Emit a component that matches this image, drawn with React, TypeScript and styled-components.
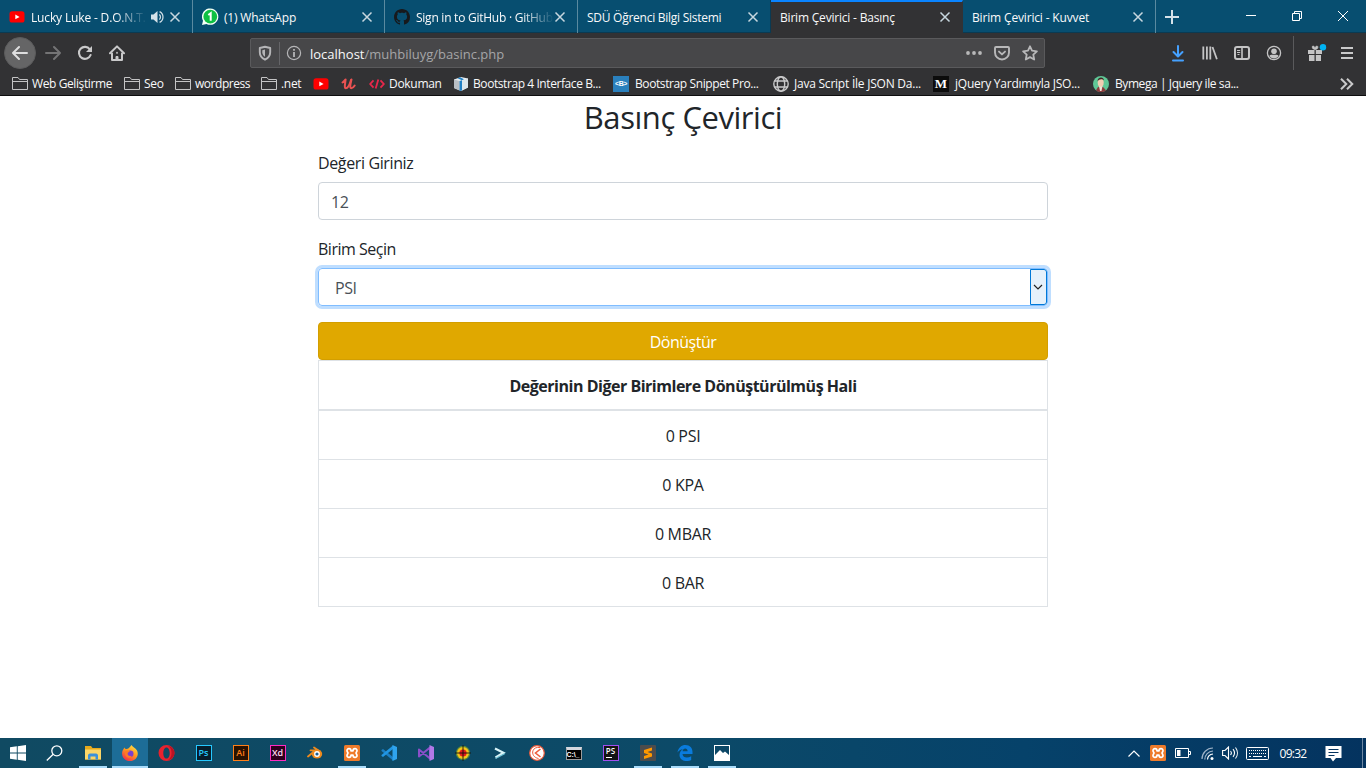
import React from 'react';
import styled, { createGlobalStyle, css } from 'styled-components';

const GlobalStyle = createGlobalStyle`
  * { box-sizing: border-box; }
  body { margin: 0; background: #fff; font-family: "Open Sans", "Noto Sans", sans-serif; }
  svg { display: block; flex: none; }
`;

const Screen = styled.div`
  width: 1366px;
  height: 768px;
  display: flex;
  flex-direction: column;
  overflow: hidden;
`;

/* ---------- tab strip ---------- */

const TabStrip = styled.div`
  height: 33px;
  display: flex;
  background: #074e70;
  box-shadow: inset 0 -1px 0 #0a3a52;
  flex: none;
`;

const Tab = styled.div<{ $width: number; $active?: boolean; $line?: boolean }>`
  width: ${p => p.$width}px;
  height: 33px;
  padding: 1px 11px 0 9px;
  display: flex;
  align-items: center;
  color: #f9f9fa;
  font-size: 12px;
  border-right: 1px solid ${p => (p.$line ? '#5a8aa0' : '#0a3a52')};
  ${p => p.$active && css`
    background: #323234;
    border-right-color: #323234;
    border-top: 2px solid #0a84ff;
    padding-top: 0;
    padding-bottom: 1px;
  `}
`;

const TabTitle = styled.span<{ $gap?: number; $spacing: number; $fade?: boolean }>`
  flex: 1;
  min-width: 0;
  overflow: hidden;
  white-space: nowrap;
  line-height: 20px;
  margin-left: ${p => p.$gap ?? 0}px;
  padding-top: 1px;
  letter-spacing: ${p => p.$spacing}px;
  ${p => p.$fade && css`
    mask-image: linear-gradient(to left, transparent 0, #000 32px);
  `}
`;

const SoundSlot = styled.span`
  margin: 0 5px 0 4px;
`;

const NewTab = styled.div`
  width: 32px;
  display: flex;
  align-items: center;
  justify-content: center;
`;

const WindowButtons = styled.div`
  margin-left: auto;
  display: flex;
`;

const WindowButton = styled.div`
  width: 46px;
  height: 31px;
  display: flex;
  align-items: center;
  justify-content: center;
`;

/* ---------- navigation bar ---------- */

const NavBar = styled.div`
  height: 39px;
  display: flex;
  align-items: center;
  background: #323234;
  padding: 0 9px 0 4px;
  flex: none;
`;

const BackButton = styled.div`
  width: 32px;
  height: 32px;
  border-radius: 50%;
  background: #656566;
  border: 1px solid #5b5b5c;
  display: flex;
  align-items: center;
  justify-content: center;
`;

const NavIcon = styled.div<{ $width: number }>`
  width: ${p => p.$width}px;
  height: 32px;
  display: flex;
  align-items: center;
  justify-content: center;
  margin-top: 1px;
`;

const UrlBar = styled.div`
  width: 795px;
  height: 30px;
  margin: 1px 0 0 117px;
  padding: 0 6px;
  background: #474749;
  border: 1px solid #5a5a5c;
  border-radius: 2px;
  display: flex;
  align-items: center;
`;

const UrlDivider = styled.div`
  width: 1px;
  height: 23px;
  margin: 0 6px;
  background: #656568;
`;

const Url = styled.div`
  flex: 1;
  margin-left: 8px;
  font-size: 13px;
  line-height: 20px;
  letter-spacing: 0;
  color: #a5a5a7;
  padding-top: 2px;
  b { font-weight: 400; color: #f9f9fa; }
`;

const UrlActions = styled.div`
  display: flex;
  align-items: center;
  gap: 12px;
`;

const NavTools = styled.div`
  margin-left: auto;
  display: flex;
  align-items: center;
`;

const ToolDivider = styled.div`
  width: 1px;
  height: 34px;
  margin: 0 5px 0 3px;
  background: #5a5a5c;
`;

/* ---------- bookmarks ---------- */

const BookmarkBar = styled.div`
  height: 24px;
  padding: 0 12px;
  display: flex;
  align-items: center;
  background: #323234;
  border-bottom: 1px solid #0e0e0f;
  flex: none;
`;

const Bookmark = styled.div<{ $width: number; $gap?: number; $spacing?: number }>`
  width: ${p => p.$width}px;
  display: flex;
  align-items: center;
  gap: ${p => p.$gap ?? 4}px;
  font-size: 12px;
  line-height: 20px;
  white-space: nowrap;
  color: #f9f9fa;
  letter-spacing: ${p => p.$spacing ?? -0.3}px;
`;

const Overflow = styled.div`
  margin-left: auto;
`;

/* ---------- page ---------- */

const Page = styled.main`
  flex: 1;
  width: 730px;
  margin: 0 auto;
  color: #212529;
  font-size: 16px;
  line-height: 24px;
`;

const Title = styled.h2`
  margin: 0 0 16px;
  height: 38px;
  padding-top: 2px;
  font-size: 31px;
  font-weight: 400;
  line-height: 38px;
  text-align: center;
  letter-spacing: -0.45px;
`;

const FormGroup = styled.div`
  margin-bottom: 16px;
`;

const FieldLabel = styled.label<{ $spacing: number }>`
  display: block;
  height: 24px;
  padding-top: 1px;
  margin-bottom: 8px;
  letter-spacing: ${p => p.$spacing}px;
`;

const Field = styled.div<{ $focus?: boolean }>`
  height: 38px;
  border: 1px solid ${p => (p.$focus ? '#80bdff' : '#ced4da')};
  border-radius: 4px;
  padding-left: ${p => (p.$focus ? 16 : 12)}px;
  display: flex;
  align-items: center;
  justify-content: space-between;
  color: #495057;
  letter-spacing: -0.4px;
  box-shadow: ${p => (p.$focus ? '0 0 0 3px #bfdeff' : 'none')};
  span { padding-top: 2px; }
`;

const SelectArrow = styled.div`
  width: 17px;
  height: 36px;
  border: 1px solid #0078d7;
  border-radius: 0 3px 3px 0;
  background: #e5f1fb;
  display: flex;
  align-items: center;
  justify-content: center;
  padding-right: 1px;
`;

const Submit = styled.button`
  display: block;
  width: 100%;
  height: 38px;
  padding: 2px 0 0;
  border: 1px solid #d39e00;
  border-radius: 4px;
  background: #e0a800;
  color: #fff;
  font: 400 16px/24px "Open Sans", "Noto Sans", sans-serif;
  letter-spacing: -0.5px;
`;

const Results = styled.div`
  border: 1px solid #dee2e6;
  border-top: 0;
  text-align: center;
`;

const ResultHead = styled.div`
  height: 50px;
  padding-top: 13px;
  border-top: 1px solid #dee2e6;
  border-bottom: 1px solid #dee2e6;
  font-weight: 700;
  letter-spacing: -0.48px;
`;

const ResultRow = styled.div`
  height: 49px;
  padding-top: 13px;
  border-top: 1px solid #dee2e6;
  letter-spacing: -0.3px;
`;

/* ---------- taskbar ---------- */

const Taskbar = styled.div`
  height: 30px;
  display: flex;
  background: linear-gradient(90deg, #104a62 0%, #0c4a68 50%, #06426a 75%, #04335f 100%);
  flex: none;
`;

const TaskItem = styled.div<{ $open?: boolean; $active?: boolean; $system?: boolean }>`
  width: ${p => (p.$active ? 36 : p.$open ? 28 : 37)}px;
  margin: 0 ${p => (p.$active ? '0' : p.$open ? '4px' : '0')} 0 ${p => (p.$active ? '1px' : p.$open ? '5px' : '0')};
  padding-right: ${p => (p.$system ? 2 : 0)}px;
  height: 30px;
  display: flex;
  align-items: center;
  justify-content: center;
  background: ${p => (p.$active ? '#1d6d97' : 'transparent')};
  box-shadow: ${p => (p.$open || p.$active ? 'inset 0 -2px 0 #a9dcfb' : 'none')};
`;

const AppTile = styled.div<{ $bg: string; $color: string; $border: string; $size?: number }>`
  width: 16px;
  height: 16px;
  background: ${p => p.$bg};
  color: ${p => p.$color};
  border: 1px solid ${p => p.$border};
  font: 600 ${p => p.$size ?? 9}px/14px "Open Sans", sans-serif;
  text-align: center;
`;

const Tray = styled.div`
  margin-left: auto;
  width: 240px;
  display: flex;
  align-items: center;
`;

const TrayIcon = styled.div<{ $width: number }>`
  width: ${p => p.$width}px;
  display: flex;
  justify-content: center;
`;

const Clock = styled.div`
  width: 32px;
  text-align: center;
  font-size: 12px;
  letter-spacing: -0.75px;
  color: #fff;
`;

const ShowDesktop = styled.div`
  width: 4px;
  height: 30px;
  margin-left: auto;
  border-left: 1px solid #6d87a3;
`;

/* ---------- icons ---------- */

const stroke = { fill: 'none', stroke: 'currentColor' } as const;

const Close = () => (
  <svg width="12" height="12" viewBox="0 0 12 12" color="#c7d7df" {...stroke} strokeWidth="1.5">
    <path d="M1.5 1.5l9 9M10.5 1.5l-9 9" />
  </svg>
);

const YouTube = () => (
  <svg width="16" height="16" viewBox="0 0 16 16">
    <rect x="0.5" y="2.3" width="15" height="11.2" rx="2.6" fill="#f00" />
    <path d="M6.3 5.5v4.8l4.3-2.4z" fill="#fff" />
  </svg>
);

const WhatsApp = () => (
  <svg width="18" height="18" viewBox="0 0 18 18">
    <path d="M0 17l1-4.300A8.200 8.200 0 1 1 4.500 16z" fill="#f4fff6" />
    <circle cx="8.300" cy="8.700" r="6.900" fill="#0ec143" />
    <path d="M6.300 7l2.400-1.700v7.500" fill="none" stroke="#fff" strokeWidth="2" />
  </svg>
);

const GitHub = () => (
  <svg width="16" height="16" viewBox="0 0 16 16">
    <path
      fill="#17191c"
      d="M8 0C3.58 0 0 3.58 0 8c0 3.54 2.29 6.53 5.47 7.59.4.07.55-.17.55-.38 0-.19-.01-.82-.01-1.49-2.01.37-2.53-.49-2.69-.94-.09-.23-.48-.94-.82-1.13-.28-.15-.68-.52-.01-.53.63-.01 1.08.58 1.23.82.72 1.21 1.87.87 2.33.66.07-.52.28-.87.51-1.07-1.78-.2-3.64-.89-3.64-3.95 0-.87.31-1.59.82-2.15-.08-.2-.36-1.02.08-2.12 0 0 .67-.21 2.2.82.64-.18 1.32-.27 2-.27s1.36.09 2 .27c1.53-1.04 2.2-.82 2.2-.82.44 1.1.16 1.92.08 2.12.51.56.82 1.27.82 2.15 0 3.07-1.87 3.75-3.65 3.95.29.25.54.73.54 1.48 0 1.07-.01 1.93-.01 2.2 0 .21.15.46.55.38A8.01 8.01 0 0 0 16 8c0-4.42-3.58-8-8-8z"
    />
  </svg>
);

const Sound = () => (
  <svg width="13" height="14" viewBox="0 0 13 14" color="#d5e2e9">
    <path d="M0 4.5h2.5L6.5 1v12l-4-3.5H0z" fill="currentColor" />
    <path d="M8.3 4.5a3.3 3.3 0 0 1 0 5M8.6 1.6a6 6 0 0 1 0 10.8" {...stroke} strokeWidth="1.2" />
  </svg>
);

const Plus = () => (
  <svg width="14" height="14" viewBox="0 0 14 14" stroke="#d5e2e9" strokeWidth="2">
    <path d="M7 0v14M0 7h14" />
  </svg>
);

const Arrow = ({ flip, color }: { flip?: boolean; color: string }) => (
  <svg width="16" height="16" viewBox="0 0 16 16" fill="none" stroke={color} strokeWidth="2" strokeLinecap="round" strokeLinejoin="round">
    <path d={flip ? 'M1 8h14M9 2l6 6-6 6' : 'M15 8H1M7 2L1 8l6 6'} />
  </svg>
);

const Reload = () => (
  <svg width="16" height="16" viewBox="0 0 16 16" fill="none" stroke="#c9c9ca" strokeWidth="2.1">
    <path d="M12.8 4.3A6 6 0 1 0 13.6 10" strokeLinecap="round" />
    <path d="M15 1v6H9z" fill="#c9c9ca" stroke="none" />
  </svg>
);

const Home = () => (
  <svg width="16" height="16" viewBox="0 0 16 16" fill="none" stroke="#c9c9ca" strokeWidth="2" strokeLinejoin="round" strokeLinecap="round">
    <path d="M1 8.3L8 1.4l7 6.9" />
    <path d="M3 8.5V15h10V8.5" />
    <path d="M7 15v-3.5h2V15z" strokeWidth="1" fill="#c9c9ca" />
    <path d="M8 7.5v.6" strokeWidth="1.6" />
  </svg>
);

const Shield = () => (
  <svg width="16" height="16" viewBox="0 0 16 16" fill="none" stroke="#b5b5b7" strokeWidth="1.9" strokeLinejoin="round">
    <path d="M8 1.8L13.2 3v4.3c0 3.6-2.4 6-5.2 7.4-2.8-1.4-5.2-3.8-5.2-7.4V3z" />
    <path d="M8 4.6v7.2c-1.7-1-2.7-2.6-2.7-4.5V5.2z" fill="#b5b5b7" stroke="none" />
  </svg>
);

const Info = () => (
  <svg width="16" height="16" viewBox="0 0 16 16" fill="none" stroke="#b5b5b7">
    <circle cx="8" cy="8" r="6.6" strokeWidth="1.2" />
    <path d="M8 7v5M8 4v1.8" strokeWidth="1.8" />
  </svg>
);

const Dots = () => (
  <svg width="16" height="16" viewBox="0 0 16 16" fill="#b8b8b9">
    <circle cx="2" cy="8" r="1.9" />
    <circle cx="8" cy="8" r="1.9" />
    <circle cx="14" cy="8" r="1.9" />
  </svg>
);

const Pocket = () => (
  <svg width="16" height="16" viewBox="0 0 16 16" fill="none" stroke="#b8b8b9" strokeWidth="1.9" strokeLinecap="round" strokeLinejoin="round">
    <path d="M2 2h12c.6 0 1 .4 1 1v4.5a7 7 0 0 1-14 0V3c0-.6.4-1 1-1z" />
    <path d="M5 6.6l3 2.8 3-2.8" />
  </svg>
);

const Star = () => (
  <svg width="16" height="16" viewBox="0 0 16 16" fill="none" stroke="#b8b8b9" strokeWidth="1.8" strokeLinejoin="round">
    <path d="M8 1.3l2 4.4 4.9.6-3.6 3.3.9 4.9L8 12.1l-4.2 2.4.9-4.9L1.1 6.3 6 5.7z" />
  </svg>
);

const Download = () => (
  <svg width="16" height="17" viewBox="0 0 16 17" fill="none" stroke="#45a1ff" strokeWidth="2" strokeLinecap="round" strokeLinejoin="round">
    <path d="M8 1v10M3.5 7L8 11.5 12.5 7M3 15.5h10" />
  </svg>
);

const Library = () => (
  <svg width="16" height="16" viewBox="0 0 16 16" fill="none" stroke="#c4c4c5" strokeWidth="1.8">
    <path d="M1.3 1.5v13M4.9 1.5v13M8.3 1.5v13M10.5 2l4.4 12.3" />
  </svg>
);

const Sidebar = () => (
  <svg width="16" height="14" viewBox="0 0 16 14" fill="none" stroke="#c4c4c5">
    <rect x="1" y="1" width="14" height="12" rx="2" strokeWidth="2" />
    <path d="M8 1v12" strokeWidth="1.6" />
    <path d="M3 4.500h3.200M3 6.500h3.200M3.500 8.500h2" strokeWidth="1" />
  </svg>
);

const Account = () => (
  <svg width="16" height="16" viewBox="0 0 16 16">
    <circle cx="8" cy="8" r="6.6" fill="none" stroke="#c4c4c5" strokeWidth="1.3" />
    <circle cx="8" cy="6.2" r="2.8" fill="#c4c4c5" />
    <path d="M3.4 11c1-1.5 2.3-1.2 4.6-1.2s3.6-.3 4.6 1.2c-1 1.5-2.7 2.4-4.6 2.4S4.4 12.500 3.400 11z" fill="#c4c4c5" />
  </svg>
);

const Gift = () => (
  <svg width="22" height="18" viewBox="0 0 22 18">
    <path d="M1 6h6.500v4H1zM8.800 6h6.200v4H8.800zM2 11h5.500v6H2zM8.800 11h5.200v6H8.800z" fill="#c4c4c5" />
    <path d="M8 5.500C5 5.500 4.500 2 6 2s2 1.500 2 3.500c0-2 .5-3.500 2-3.500s1.500 3.500-2 3.500z" fill="#c4c4c5" stroke="#c4c4c5" strokeWidth=".6" />
    <circle cx="16" cy="3.300" r="3.200" fill="#00b3f4" />
  </svg>
);

const Menu = () => (
  <svg width="12" height="14" viewBox="0 0 12 14" stroke="#c9c9ca" strokeWidth="2">
    <path d="M0 2h12M0 7h12M0 12h12" />
  </svg>
);

const Folder = () => (
  <svg width="16" height="16" viewBox="0 0 16 16" fill="none" stroke="#c4c4c5">
    <path d="M.5 13.500v-12h5.500l1.500 2h8v10zM.5 5.500h15" />
  </svg>
);

const Udemy = () => (
  <svg width="16" height="16" viewBox="0 0 16 16" fill="none" stroke="#ea5252" strokeLinecap="round" strokeLinejoin="round">
    <path d="M1.500 6.500C3 5.500 3.800 4.300 4.600 3.500 4.500 6 2.800 12.300 4.800 12.300c2.200 0 4-4 5.200-8.300" strokeWidth="2" />
    <path d="M10.500 3.500C9.700 7 8.300 12.300 10.300 12.300c1.300 0 2.400-1.200 3.400-2.800" strokeWidth="2" />
  </svg>
);

const Code = () => (
  <svg width="16" height="16" viewBox="0 0 16 16" fill="none" strokeWidth="1.800">
    <path d="M4.500 4.300L1.200 8l3.300 3.700M9.300 3.500l-2.600 9" stroke="#e8274b" />
    <path d="M11.500 4.300L14.800 8l-3.300 3.700" stroke="#e8274b" />
  </svg>
);

const Cube = () => (
  <svg width="16" height="16" viewBox="0 0 16 16">
    <path d="M1 3.500L8 1l7 1.500v9L8 15l-7-3z" fill="#e7edf1" />
    <path d="M1 3.500L6.500 5v9.400L1 12z" fill="#b8bec4" />
    <path d="M6.500 5L9 4.300v10.200l-2.500.5zM4.500 2.200L7 1.300l4 2-2 1z" fill="#2180c4" />
    <path d="M9 4.300l6-1.800v9l-6 3z" fill="#dce6ec" />
  </svg>
);

const BootTile = styled.div`
  width: 16px;
  height: 16px;
  background: #2a80bd;
  color: #fff;
  font: 700 7px/15px "Liberation Sans", sans-serif;
  letter-spacing: -0.4px;
  text-align: center;
`;

const MediumTile = styled.div`
  width: 16px;
  height: 16px;
  background: #0c0c0c;
  color: #fff;
  font: 700 13px/16px "Liberation Serif", serif;
  letter-spacing: 0;
  text-align: center;
`;

const Globe = () => (
  <svg width="16" height="16" viewBox="0 0 16 16" fill="none" stroke="#c9c9ca" strokeWidth="1.400">
    <circle cx="8" cy="8" r="7.200" />
    <ellipse cx="8" cy="8" rx="3.700" ry="7.200" />
    <path d="M1.500 5h13M1.500 11h13" />
  </svg>
);

const Avatar = () => (
  <svg width="16" height="16" viewBox="0 0 16 16">
    <circle cx="8" cy="8" r="8" fill="#5fc796" />
    <path d="M3 14.200l2-3.200h5l3 3.200a8 8 0 0 1-10 0z" fill="#8c3a3c" />
    <path d="M6 10h3.500L8.500 15 7 15z" fill="#f0e4d8" />
    <ellipse cx="7.700" cy="6.500" rx="3" ry="4.300" fill="#f2cdb2" />
    <path d="M4.600 5.500C4 .8 11 0 10.900 4.500 9.500 2.700 6 2.500 4.600 5.500z" fill="#3d2b28" />
  </svg>
);

const Chevrons = () => (
  <svg width="14" height="12" viewBox="0 0 14 12" fill="none" stroke="#c9c9ca" strokeWidth="2">
    <path d="M1 .700L6.300 6 1 11.300M7 .700L12.300 6 7 11.300" />
  </svg>
);

const Windows = () => (
  <svg width="16" height="16" viewBox="0 0 16 16" fill="#fff">
    <path d="M0 2.200l6.800-.9v6.200H0zM7.700 1.200L16 0v7.500H7.700zM0 8.400h6.800v6.300L0 13.800zM7.700 8.400H16V16l-8.300-1.200z" />
  </svg>
);

const Search = () => (
  <svg width="17" height="16" viewBox="0 0 17 16" fill="none" stroke="#fff" strokeWidth="1.300">
    <circle cx="10.800" cy="5.800" r="5" />
    <path d="M7.200 9.300L.8 15.500" />
  </svg>
);

const Explorer = () => (
  <svg width="16" height="14" viewBox="0 0 16 14">
    <path d="M0 0h6l1.500 2H16v11.500H0z" fill="#e5a91c" />
    <path d="M0 3.500h16v10H0z" fill="#fbd667" />
    <path d="M3 13.500V9a2 2 0 0 1 2-1.500h6A2 2 0 0 1 13 9v4.500h-2.500v-3h-5v3z" fill="#3c91d9" />
  </svg>
);

const Firefox = () => (
  <svg width="16" height="16" viewBox="0 0 16 16">
    <defs>
      <linearGradient id="fx" x1="0.800" y1="0" x2="0.200" y2="1">
        <stop offset="0" stopColor="#ffe24a" />
        <stop offset="0.450" stopColor="#ff9a1f" />
        <stop offset="1" stopColor="#f5254f" />
      </linearGradient>
    </defs>
    <path d="M9.500 0c.8 2 4 3 5.500 5.500 2.500 5-1.500 10.500-7 10.500S-.8 11.500.3 6.500C.8 4.500 2 3.500 2.500 2.500 3 3.500 3.500 4 4.500 4 6 4 7 3 9.500 0z" fill="url(#fx)" />
    <circle cx="8.200" cy="8.800" r="3.300" fill="#7a3fd0" />
    <path d="M3 6c2-1 3.500-.5 5 .8-1.500.2-2 .8-2.300 1.500-.5 2 1.600 3.500 4 2.500C8.500 14 3.500 13 3 9z" fill="#ff7b24" />
  </svg>
);

const Opera = () => (
  <svg width="17" height="16" viewBox="0 0 17 16">
    <path fillRule="evenodd" d="M.5 8a8 8 0 1 0 16 0 8 8 0 1 0-16 0zM5.300 8c0-3.200 1.300-5.600 3.200-5.600s3.200 2.400 3.200 5.600-1.300 5.600-3.200 5.600S5.300 11.200 5.300 8z" fill="#e8222e" />
    <path d="M10 .8C14 1.800 16.500 4.500 16.500 8s-2.500 6.200-6.500 7.200C12.500 13.500 13.500 11 13.500 8S12.500 2.500 10 .8z" fill="#b81424" />
  </svg>
);

const Blender = () => (
  <svg width="16" height="14" viewBox="0 0 16 14">
    <path d="M1 10.500L8.500 4.300H3.500M7 1.500l6 4" fill="none" stroke="#ee8a1d" strokeWidth="1.800" strokeLinecap="round" />
    <ellipse cx="10" cy="8" rx="5.200" ry="4.600" fill="#ee8a1d" />
    <circle cx="10" cy="8" r="2.900" fill="#fff" />
    <circle cx="10" cy="8" r="1.600" fill="#1c5d94" />
  </svg>
);

const Xampp = () => (
  <svg width="16" height="16" viewBox="0 0 16 16">
    <rect width="16" height="16" rx="1.500" fill="#ee7b2b" />
    <path d="M7 5.800C7 3 3 3 3 5.500 3 7 4 7.400 4 8s-1 1-1 2.500C3 13 7 13 7 10.200h2C9 13 13 13 13 10.500 13 9 12 8.600 12 8s1-1 1-2.500C13 3 9 3 9 5.800z" fill="none" stroke="#fff" strokeWidth="1.700" strokeLinejoin="round" />
  </svg>
);

const VsCode = () => (
  <svg width="16" height="16" viewBox="0 0 16 16">
    <path d="M.5 5L2 4l10 8v3.500L.5 6z" fill="#1c7fc4" />
    <path d="M.5 11L2 12l10-8V.5L.5 10z" fill="#2196e3" />
    <path d="M11.500 0L16 2v12l-4.500 2z" fill="#2fa4ee" />
  </svg>
);

const VisualStudio = () => (
  <svg width="16" height="16" viewBox="0 0 16 16">
    <path d="M1 4.500v7L12 2.500v11L1 4.500z" fill="none" stroke="#8a4fc9" strokeWidth="2" strokeLinejoin="round" />
    <path d="M11.500 0L16 2v12l-4.500 2z" fill="#b179e8" />
  </svg>
);

const Target = () => (
  <svg width="16" height="16" viewBox="0 0 16 16">
    <circle cx="8" cy="8" r="7.200" fill="#5d8c3a" />
    <circle cx="8" cy="8" r="6" fill="#f5c518" />
    <circle cx="8" cy="8" r="3.600" fill="#e31b1b" />
    <path d="M8 0v16M0 8h16" stroke="#111" strokeWidth=".9" />
  </svg>
);

const Prompt = () => (
  <svg width="12" height="12" viewBox="0 0 12 12" fill="none">
    <path d="M1 1.500l8.500 4.300L1.500 10.500" stroke="#d9f4f8" strokeWidth="2.200" />
    <path d="M1.500 11.500l9.500-5" stroke="#6cc0d3" strokeWidth="1.200" />
  </svg>
);

const CCleaner = () => (
  <svg width="16" height="16" viewBox="0 0 16 16">
    <circle cx="8" cy="8" r="7.300" fill="#fff" stroke="#ee5a3a" strokeWidth="1.200" />
    <path d="M11.500 4L6.500 8l5 4" fill="none" stroke="#ee5a3a" strokeWidth="1.600" />
    <path d="M11 2.500c-9-1.500-10 9.500-1.500 11" fill="none" stroke="#ee5a3a" strokeWidth="1" />
  </svg>
);

const Cmd = styled.div`
  width: 16px;
  height: 13px;
  background: #000;
  border: 1px solid #9b9b9b;
  border-top: 3px solid #d4d7de;
  color: #fff;
  font: 700 7px/9px "Liberation Sans", sans-serif;
  letter-spacing: -0.1px;
  white-space: nowrap;
`;

const PhpStorm = styled(AppTile)`
  line-height: 9px;
  &::after {
    content: "";
    display: block;
    width: 6px;
    height: 1px;
    margin: 2px 0 0 2px;
    background: #fff;
  }
`;

const Sublime = () => (
  <svg width="16" height="16" viewBox="0 0 16 16">
    <rect width="16" height="16" rx="1" fill="#4c4c4c" />
    <path d="M12 2.500v3L7.500 7 12 8.500v3L4 14v-3l4.500-1.500L4 8V5z" fill="#ff9800" />
  </svg>
);

const Edge = () => (
  <svg width="16" height="16" viewBox="0 0 16 16">
    <path d="M.5 7.500C1.300 2.500 4.500 0 8.500 0c4.500 0 7 3.200 7 7v2H5.500c.2 3.800 5 4.500 8.700 2.300V15C9 17.500 2.500 15.500 2.500 10c0-3 1.800-4.800 3.500-5.700-2.500.2-4.300 1.200-5.500 3.200zM5.600 6.300h5c0-3.800-4.700-3.500-5 0z" fill="#0a7bdc" />
  </svg>
);

const Photos = () => (
  <svg width="16" height="16" viewBox="0 0 16 16">
    <rect x=".5" y=".5" width="15" height="15" fill="#0b4766" stroke="#fff" />
    <path d="M1 10l5-5 3 3 2-1.500 4 3.500v5.500H1z" fill="#fff" />
  </svg>
);

const Battery = () => (
  <svg width="16" height="10" viewBox="0 0 16 10">
    <path d="M.5 .5h13v9H.5zM14 3.500h1.500v3H14" fill="none" stroke="#fff" />
    <path d="M2 2h3.500v6H2z" fill="#fff" />
  </svg>
);

const Wifi = () => (
  <svg width="13" height="13" viewBox="0 0 13 13" fill="none" strokeWidth="1.200">
    <path d="M1 12A11 11 0 0 1 12 1M3.800 12.500A8.500 8.500 0 0 1 12 4" stroke="#9fb3c8" />
    <path d="M6.500 12.500A6 6 0 0 1 12 7" stroke="#fff" />
    <circle cx="11" cy="11.500" r="1.500" fill="#fff" />
  </svg>
);

const Volume = () => (
  <svg width="17" height="14" viewBox="0 0 17 14" fill="none" stroke="#fff" strokeWidth="1.100">
    <path d="M.6 4.500H3L6.500 1v12L3 9.500H.6zM8.500 5a3 3 0 0 1 0 4M11 3.200a6 6 0 0 1 0 7.600M13.500 1.500a9 9 0 0 1 0 11" />
  </svg>
);

const Keyboard = () => (
  <svg width="23" height="13" viewBox="0 0 23 13" fill="none" stroke="#fff">
    <rect x=".5" y=".5" width="22" height="12" rx="1" />
    <path d="M3 3.500h17M3 6.500h17" strokeDasharray="1 1" />
    <path d="M3 9.500h2M7 9.500h9M18 9.500h2" />
  </svg>
);

const Notice = () => (
  <svg width="17" height="17" viewBox="0 0 17 17">
    <path d="M.5 1h16v12h-5.500l-3 3.500-2.500-3.500h-5z" fill="#fff" />
    <path d="M3.500 4.500h10M3.500 7.500h10M3.500 10.500h6" stroke="#04335f" />
  </svg>
);

const results = ['0 PSI', '0 KPA', '0 MBAR', '0 BAR'];

export default function App() {
  return (
    <Screen>
      <GlobalStyle />
      <TabStrip>
        <Tab $width={193} $line>
          <YouTube />
          <TabTitle $gap={6} $spacing={-0.15} $fade>Lucky Luke - D.O.N.T.</TabTitle>
          <SoundSlot><Sound /></SoundSlot>
          <Close />
        </Tab>
        <Tab $width={192} $line>
          <WhatsApp />
          <TabTitle $gap={4} $spacing={-0.2}>(1) WhatsApp</TabTitle>
          <Close />
        </Tab>
        <Tab $width={193} $line>
          <GitHub />
          <TabTitle $gap={6} $spacing={-0.25} $fade>Sign in to GitHub · GitHub</TabTitle>
          <Close />
        </Tab>
        <Tab $width={193}>
          <TabTitle $spacing={-0.26}>SDÜ Öğrenci Bilgi Sistemi</TabTitle>
          <Close />
        </Tab>
        <Tab $width={192} $active>
          <TabTitle $spacing={-0.2}>Birim Çevirici - Basınç</TabTitle>
          <Close />
        </Tab>
        <Tab $width={193} $line>
          <TabTitle $spacing={-0.16}>Birim Çevirici - Kuvvet</TabTitle>
          <Close />
        </Tab>
        <NewTab><Plus /></NewTab>
        <WindowButtons>
          <WindowButton>
            <svg width="10" height="10" viewBox="0 0 10 10" stroke="#fff"><path d="M0 4.500h10" /></svg>
          </WindowButton>
          <WindowButton>
            <svg width="10" height="10" viewBox="0 0 10 10" stroke="#fff" fill="none"><path d="M.5 2.500h7v7h-7zM2.500 2.500v-2h7v7h-2" /></svg>
          </WindowButton>
          <WindowButton>
            <svg width="10" height="10" viewBox="0 0 10 10" stroke="#fff"><path d="M0 0l10 10M10 0L0 10" /></svg>
          </WindowButton>
        </WindowButtons>
      </TabStrip>

      <NavBar>
        <BackButton><Arrow color="#dededf" /></BackButton>
        <NavIcon $width={34}><Arrow flip color="#747475" /></NavIcon>
        <NavIcon $width={30}><Reload /></NavIcon>
        <NavIcon $width={33}><Home /></NavIcon>
        <UrlBar>
          <Shield />
          <UrlDivider />
          <Info />
          <Url><b>localhost</b>/muhbiluyg/basinc.php</Url>
          <UrlActions><Dots /><Pocket /><Star /></UrlActions>
        </UrlBar>
        <NavTools>
          <NavIcon $width={32}><Download /></NavIcon>
          <NavIcon $width={32}><Library /></NavIcon>
          <NavIcon $width={32}><Sidebar /></NavIcon>
          <NavIcon $width={32}><Account /></NavIcon>
          <ToolDivider />
          <NavIcon $width={38}><Gift /></NavIcon>
          <NavIcon $width={20}><Menu /></NavIcon>
        </NavTools>
      </NavBar>

      <BookmarkBar>
        <Bookmark $width={112} $spacing={-0.4}><Folder />Web Geliştirme</Bookmark>
        <Bookmark $width={51}><Folder />Seo</Bookmark>
        <Bookmark $width={86} $spacing={-0.45}><Folder />wordpress</Bookmark>
        <Bookmark $width={52}><Folder />.net</Bookmark>
        <Bookmark $width={28}><YouTube /></Bookmark>
        <Bookmark $width={28}><Udemy /></Bookmark>
        <Bookmark $width={84}><Code />Dokuman</Bookmark>
        <Bookmark $width={160} $spacing={-0.42}><Cube />Bootstrap 4 Interface B...</Bookmark>
        <Bookmark $width={160} $gap={6} $spacing={-0.4}><BootTile>&lt;B&gt;</BootTile>Bootstrap Snippet Pro...</Bookmark>
        <Bookmark $width={160} $gap={5} $spacing={-0.23}><Globe />Java Script İle JSON Da...</Bookmark>
        <Bookmark $width={160} $gap={6} $spacing={-0.24}><MediumTile>M</MediumTile>jQuery Yardımıyla JSO...</Bookmark>
        <Bookmark $width={160} $gap={6} $spacing={-0.42}><Avatar />Bymega | Jquery ile sa...</Bookmark>
        <Overflow><Chevrons /></Overflow>
      </BookmarkBar>

      <Page>
        <Title>Basınç Çevirici</Title>
        <FormGroup>
          <FieldLabel $spacing={-0.37}>Değeri Giriniz</FieldLabel>
          <Field><span>12</span></Field>
        </FormGroup>
        <FormGroup>
          <FieldLabel $spacing={-0.49}>Birim Seçin</FieldLabel>
          <Field $focus>
            <span>PSI</span>
            <SelectArrow>
              <svg width="10" height="6" viewBox="0 0 10 6" fill="none" stroke="#222" strokeWidth="1.200"><path d="M1 1l4 4 4-4" /></svg>
            </SelectArrow>
          </Field>
        </FormGroup>
        <Submit>Dönüştür</Submit>
        <Results>
          <ResultHead>Değerinin Diğer Birimlere Dönüştürülmüş Hali</ResultHead>
          {results.map(r => <ResultRow key={r}>{r}</ResultRow>)}
        </Results>
      </Page>

      <Taskbar>
        <TaskItem $system><Windows /></TaskItem>
        <TaskItem $system><Search /></TaskItem>
        <TaskItem $open><Explorer /></TaskItem>
        <TaskItem $active><Firefox /></TaskItem>
        <TaskItem><Opera /></TaskItem>
        <TaskItem><AppTile $bg="#071d2b" $color="#26c9ff" $border="#26c9ff">Ps</AppTile></TaskItem>
        <TaskItem><AppTile $bg="#2a1200" $color="#ff7f18" $border="#ff7f18">Ai</AppTile></TaskItem>
        <TaskItem><AppTile $bg="#2e001e" $color="#ffd9f2" $border="#ff2bc2">Xd</AppTile></TaskItem>
        <TaskItem><Blender /></TaskItem>
        <TaskItem $open><Xampp /></TaskItem>
        <TaskItem><VsCode /></TaskItem>
        <TaskItem><VisualStudio /></TaskItem>
        <TaskItem><Target /></TaskItem>
        <TaskItem><Prompt /></TaskItem>
        <TaskItem><CCleaner /></TaskItem>
        <TaskItem><Cmd>C:\_</Cmd></TaskItem>
        <TaskItem><PhpStorm $bg="#141414" $color="#fff" $border="#a24ff0" $size={8}>PS</PhpStorm></TaskItem>
        <TaskItem $open><Sublime /></TaskItem>
        <TaskItem $open><Edge /></TaskItem>
        <TaskItem $open><Photos /></TaskItem>
        <Tray>
          <TrayIcon $width={16}>
            <svg width="12" height="7" viewBox="0 0 12 7" fill="none" stroke="#fff" strokeWidth="1.200"><path d="M.5 6.500L6 1l5.500 5.500" /></svg>
          </TrayIcon>
          <TrayIcon $width={32}><Xampp /></TrayIcon>
          <TrayIcon $width={17}><Battery /></TrayIcon>
          <TrayIcon $width={33}><Wifi /></TrayIcon>
          <TrayIcon $width={13}><Volume /></TrayIcon>
          <TrayIcon $width={40}><Keyboard /></TrayIcon>
          <Clock>09:32</Clock>
          <TrayIcon $width={48}><Notice /></TrayIcon>
          <ShowDesktop />
        </Tray>
      </Taskbar>
    </Screen>
  );
}
